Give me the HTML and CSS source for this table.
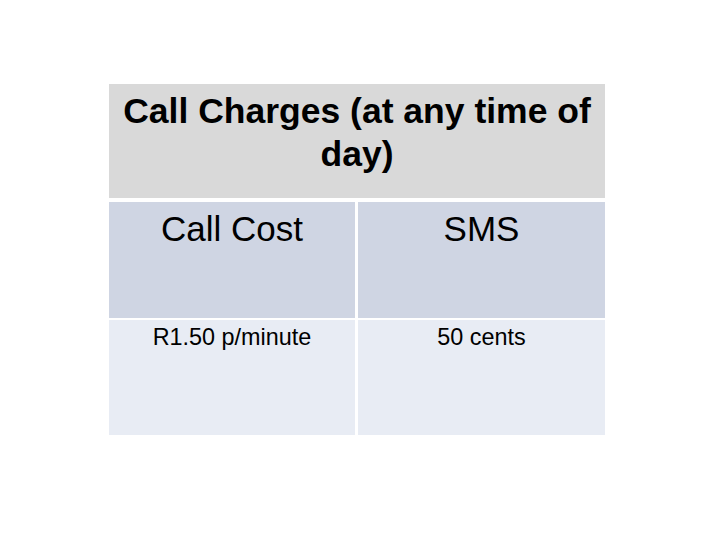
FILE: index.html
```html
<!DOCTYPE html>
<html>
<head>
<meta charset="utf-8">
<link rel="stylesheet" href="styles.css">
</head>
<body>
<div class="page">
  <div class="table">
    <div class="head">Call Charges (at any time of day)</div>
    <div class="row row-a">
      <div class="cell big">Call Cost</div>
      <div class="cell big">SMS</div>
    </div>
    <div class="row row-b">
      <div class="cell small">R1.50 p/minute</div>
      <div class="cell small">50 cents</div>
    </div>
  </div>
</div>
</body>
</html>
```
FILE: styles.css
```css
html, body {
  margin: 0;
  padding: 0;
  background: #ffffff;
}
.page {
  width: 720px;
  height: 540px;
  padding: 84px 0 0 109px;
  box-sizing: border-box;
  font-family: "Liberation Sans", Arial, sans-serif;
  color: #000;
}
.table {
  width: 496px;
  display: flex;
  flex-direction: column;
}
.head {
  height: 114px;
  box-sizing: border-box;
  margin-bottom: 4px;
  background: #d9d9d9;
  font-weight: bold;
  font-size: 35.5px;
  line-height: 43px;
  text-align: center;
  padding: 6px 6px 0;
}
.row {
  display: grid;
  grid-template-columns: 246px 247px;
  column-gap: 3px;
}
.row-a {
  height: 116px;
  margin-bottom: 2px;
}
.row-b {
  height: 115px;
}
.row-a .cell {
  background: #cfd5e3;
}
.row-b .cell {
  background: #e8ecf4;
}
.cell {
  text-align: center;
  box-sizing: border-box;
}
.big {
  font-size: 35px;
  line-height: 40px;
  padding-top: 7px;
}
.small {
  font-size: 23.4px;
  line-height: 26px;
  padding-top: 4px;
}
```
